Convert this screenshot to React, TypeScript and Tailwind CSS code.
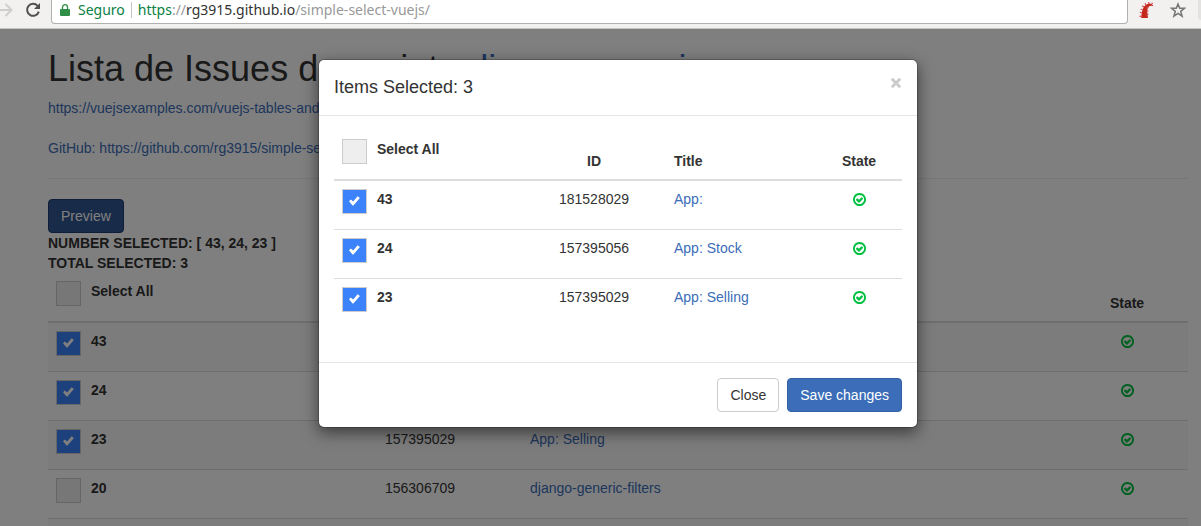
import { useState } from "react";

type Issue = { number: number; id: string; title: string };

const issues: Issue[] = [
  { number: 43, id: "181528029", title: "App:" },
  { number: 24, id: "157395056", title: "App: Stock" },
  { number: 23, id: "157395029", title: "App: Selling" },
  { number: 20, id: "156306709", title: "django-generic-filters" },
  { number: 18, id: "156306512", title: "django-tables" },
];

function StateIcon() {
  return (
    <svg viewBox="0 0 1536 1536" className="mx-auto mt-1 block size-[13px]" fill="#00c041" role="img" aria-label="open">
      <path d="M1171 723l-422 422q-19 19-45 19t-45-19l-294-294q-19-19-19-45t19-45l102-102q19-19 45-19t45 19l147 147 275-275q19-19 45-19t45 19l102 102q19 19 19 45t-19 45zm141 45q0-148-73-273t-198-198-273-73-273 73-198 198-73 273 73 273 198 198 273 73 273-73 198-198 73-273zm224 0q0 209-103 385.5t-279.5 279.5-385.5 103-385.5-103-279.5-279.5-103-385.5 103-385.5 279.5-279.5 385.5-103 385.5 103 279.5 279.5 103 385.5z" />
    </svg>
  );
}

function Check({ label, checked, onChange }: { label: string; checked: boolean; onChange: () => void }) {
  return (
    <label className="flex h-8 cursor-pointer items-start gap-2.5 font-bold">
      <span className="grid size-[25px] shrink-0">
        <input
          type="checkbox"
          checked={checked}
          onChange={onChange}
          className="col-start-1 row-start-1 size-[25px] appearance-none border border-[#ccc] bg-[#eee] checked:bg-[#3b82fb]"
        />
        {checked && (
          <svg viewBox="0 0 25 25" className="pointer-events-none col-start-1 row-start-1 size-[25px]" fill="#fff">
            <path d="M7 12.3L8.8 10.5L11.2 12.6L15.6 7.2L17.9 9.1L11.4 16.6H10.5Z" />
          </svg>
        )}
      </span>
      <span>{label}</span>
    </label>
  );
}

function IssueTable({
  rows,
  selected,
  onToggle,
  striped = false,
  allChecked,
  onToggleAll,
}: {
  rows: Issue[];
  selected: number[];
  onToggle: (n: number) => void;
  striped?: boolean;
  allChecked: boolean;
  onToggleAll: () => void;
}) {
  const head = "border-b-2 border-[#ddd] p-2 align-bottom";
  return (
    <table className="w-full table-fixed border-separate border-spacing-0">
      <colgroup>
        <col className={striped ? "w-[270px]" : "w-[188px]"} />
        <col className={striped ? "w-[204px]" : "w-36"} />
        <col />
        <col className={striped ? "w-[122px]" : "w-[86px]"} />
      </colgroup>
      <thead>
        <tr>
          <th className={`${head} text-left`}>
            <Check label="Select All" checked={allChecked} onChange={onToggleAll} />
          </th>
          <th className={`${head} text-center`}>ID</th>
          <th className={`${head} text-left`}>Title</th>
          <th className={`${head} text-center`}>State</th>
        </tr>
      </thead>
      <tbody>
        {rows.map((row, i) => {
          const cell = `p-2 align-top ${i > 0 ? "border-t border-[#ddd]" : ""}`;
          return (
            <tr key={row.number} className={striped && i % 2 === 0 ? "bg-[#f9f9f9]" : ""}>
              <td className={cell}>
                <Check
                  label={String(row.number)}
                  checked={selected.includes(row.number)}
                  onChange={() => onToggle(row.number)}
                />
              </td>
              <td className={`${cell} text-center`}>{row.id}</td>
              <td className={cell}>
                <a href="#" className="text-[#3b6db8]">{row.title}</a>
              </td>
              <td className={`${cell} text-center`}>
                <StateIcon />
              </td>
            </tr>
          );
        })}
      </tbody>
    </table>
  );
}

function BrowserBar() {
  return (
    <header className="flex h-[29px] shrink-0 items-start border-b border-[#c4c6c4] bg-[#f2f1f0] font-['Noto_Sans','Open_Sans',sans-serif] text-sm">
      <div className="flex h-5 w-[51px] shrink-0 items-center justify-between pr-2.5">
        <svg viewBox="0 0 13 16" className="h-4 w-[13px]" fill="none" stroke="#cfcecd" strokeWidth="2">
          <path d="M0 8H11M5.5 2L11.5 8L5.5 14" />
        </svg>
        <svg viewBox="0 0 16 16" className="size-4" fill="none" stroke="#505050" strokeWidth="2">
          <path d="M12.6 3.8A6 6 0 1 0 13.8 9.6" />
          <path d="M15 1V7H9Z" fill="#505050" stroke="none" />
        </svg>
      </div>
      <div className="flex h-6 flex-1 items-start rounded-b-sm border border-t-0 border-[#b0b0ae] bg-white">
        <div className="flex h-5 items-center whitespace-nowrap pl-2">
          <svg viewBox="0 0 10 12" className="h-3 w-2.5" fill="#2f8f46">
            <path d="M1 5H9Q10 5 10 6V11Q10 12 9 12H1Q0 12 0 11V6Q0 5 1 5Z" />
            <path d="M2.5 6V3.2A2.5 2.5 0 0 1 7.5 3.2V6" fill="none" stroke="#2f8f46" strokeWidth="1.3" />
          </svg>
          <span className="pl-2 text-[#0b8043]">Seguro</span>
          <span className="mx-1.5 h-4 w-px bg-[#c4c4c4]" />
          <span className="text-[#999]">
            <span className="text-[#0b8043]">https</span>://<span className="text-[#333]">rg3915.github.io</span>/simple-select-vuejs/
          </span>
        </div>
      </div>
      <div className="flex h-5 w-[73px] shrink-0 items-center pl-2.5">
        <svg viewBox="0 0 16 18" className="h-[18px] w-4">
          <path d="M3.2 17Q3.5 6 8.5 3.4Q13.5 1 15.5 5.2Q11 4 9.8 7Q8.8 10 10 17Z" fill="#c4281b" />
          <path d="M2.6 16Q2.5 6 8 2.8Q12 .8 15 3.4M9.5 6L9.4 14" fill="none" stroke="#d64a5a" strokeWidth="2" strokeDasharray="1.2 2.2" />
        </svg>
        <svg viewBox="0 0 16 16" className="ml-4 size-4" fill="none" stroke="#777" strokeWidth="1.5">
          <path d="M8 2L9.7 6.3H14.4L10.7 9.3L12.1 14.2L8 11.4L3.9 14.2L5.3 9.3L1.6 6.3H6.3Z" />
        </svg>
        <span className="ml-auto h-5 w-[3px] rounded-bl-sm bg-[#e3e2e1]" />
      </div>
    </header>
  );
}

export default function App() {
  const [selected, setSelected] = useState([43, 24, 23]);
  const [open, setOpen] = useState(true);
  const [modalAll, setModalAll] = useState(false);
  const toggle = (n: number) =>
    setSelected((s) => (s.includes(n) ? s.filter((x) => x !== n) : [...s, n]));
  const allSelected = selected.length === issues.length;
  const toggleAll = () => setSelected(allSelected ? [] : issues.map((i) => i.number));

  return (
    <div className="flex h-screen flex-col overflow-hidden bg-white">
      <BrowserBar />
      <div className="relative min-h-0 flex-1 overflow-hidden font-['Liberation_Sans',Arial,sans-serif] text-sm leading-5 text-[#333]">
        <main className="pl-12 pr-[13px] pt-5">
          <h1 className="text-4xl leading-[39px]">
            Lista de Issues do projeto{" "}
            <a href="#" className="text-[#3b6db8]">django-experience</a>
          </h1>
          <p className="mt-2.5">
            <a href="#" className="text-[#3b6db8]">https://vuejsexamples.com/vuejs-tables-and-select-all-checkboxes/</a>
          </p>
          <p className="mt-5">
            <a href="#" className="text-[#3b6db8]">GitHub: https://github.com/rg3915/simple-select-vuejs</a>
          </p>
          <hr className="my-5 border-[#eee]" />
          <button
            type="button"
            onClick={() => setOpen(true)}
            className="block h-[34px] rounded border border-[#1e3d70] bg-[#305691] px-3 text-white"
          >
            Preview
          </button>
          <p className="font-bold">NUMBER SELECTED: [ {selected.join(", ")} ]</p>
          <p className="font-bold">TOTAL SELECTED: {selected.length}</p>
          <IssueTable rows={issues} selected={selected} onToggle={toggle} striped allChecked={allSelected} onToggleAll={toggleAll} />
        </main>

        {open && (
          <div className="absolute inset-0 flex items-start justify-center bg-black/50 pl-[35px] pt-[30px]">
            <div
              role="dialog"
              aria-labelledby="modal-title"
              className="w-full max-w-[600px] rounded-md border border-black/20 bg-white bg-clip-padding shadow-[0_5px_15px_rgba(0,0,0,0.5)]"
            >
              <div className="flex items-start justify-between border-b border-[#e5e5e5] p-[15px]">
                <h4 id="modal-title" className="text-lg leading-[25px]">Items Selected: {selected.length}</h4>
                <button type="button" aria-label="Close dialog" onClick={() => setOpen(false)} className="flex h-4 w-3 items-center">
                  <svg viewBox="0 0 12 12" className="size-3" stroke="#ccc" strokeWidth="3">
                    <path d="M1.8 1.8L10.2 10.2M10.2 1.8L1.8 10.2" />
                  </svg>
                </button>
              </div>
              <div className="p-[15px] pb-[35px]">
                <IssueTable
                  rows={issues.filter((i) => selected.includes(i.number))}
                  selected={selected}
                  onToggle={toggle}
                  allChecked={modalAll}
                  onToggleAll={() => setModalAll(!modalAll)}
                />
              </div>
              <div className="flex justify-end gap-2 border-t border-[#e5e5e5] p-[15px]">
                <button type="button" onClick={() => setOpen(false)} className="h-[34px] rounded border border-[#ccc] bg-white px-3">
                  Close
                </button>
                <button type="button" className="h-[34px] rounded border border-[#3461a5] bg-[#3b6db8] px-3 text-white">
                  Save changes
                </button>
              </div>
            </div>
          </div>
        )}
      </div>
    </div>
  );
}
